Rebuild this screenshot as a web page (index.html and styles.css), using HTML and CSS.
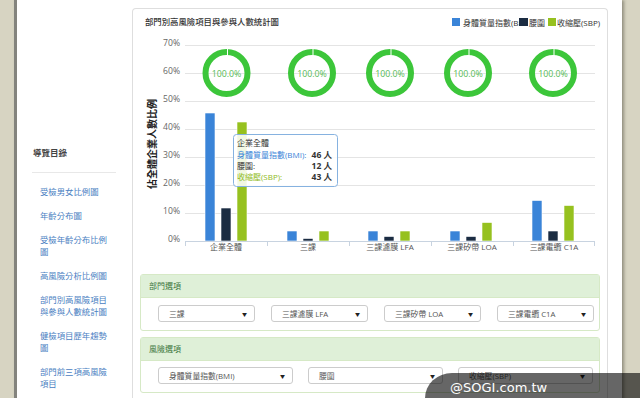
FILE: index.html
```html
<!DOCTYPE html>
<html lang="zh-Hant">
<head>
<meta charset="utf-8">
<title>部門別高風險項目與參與人數統計圖</title>
<link rel="stylesheet" href="styles.css">
</head>
<body>
<div class="page">
  <aside class="sidebar">
    <h3 class="nav-title">導覽目錄</h3>
    <ul class="nav-list">
      <li><a href="#">受檢男女比例圖</a></li>
      <li><a href="#">年齡分布圖</a></li>
      <li><a href="#">受檢年齡分布比例圖</a></li>
      <li><a href="#">高風險分析比例圖</a></li>
      <li><a href="#">部門別高風險項目與參與人數統計圖</a></li>
      <li><a href="#">健檢項目歷年趨勢圖</a></li>
      <li><a href="#">部門前三項高風險項目</a></li>
    </ul>
  </aside>
  <main class="main">
    <section class="card">
      <svg class="chart" width="474" height="259" viewBox="133 9 474 259" xmlns="http://www.w3.org/2000/svg">
        <defs>
          <clipPath id="clipL1"><rect x="440" y="10" width="79" height="22"/></clipPath>
          <clipPath id="clipL3"><rect x="540" y="10" width="61" height="22"/></clipPath>
        </defs>
        <text class="title" x="145" y="25">部門別高風險項目與參與人數統計圖</text>

        <rect x="452" y="18" width="8" height="8" fill="#3a84d8"/>
        <text class="legend" x="463" y="25.5" clip-path="url(#clipL1)">身體質量指數(BMI)</text>
        <rect x="519" y="18" width="9" height="8" fill="#1b2c42"/>
        <text class="legend" x="529" y="25.5">腰圍</text>
        <rect x="548" y="18" width="8" height="8" fill="#96c11f"/>
        <text class="legend" x="557" y="25.5" clip-path="url(#clipL3)">收縮壓(SBP)</text>

        <g class="grid">
          <line x1="185" x2="595" y1="45.5" y2="45.5"/>
          <line x1="185" x2="595" y1="73.5" y2="73.5"/>
          <line x1="185" x2="595" y1="101.5" y2="101.5"/>
          <line x1="185" x2="595" y1="129.5" y2="129.5"/>
          <line x1="185" x2="595" y1="157.5" y2="157.5"/>
          <line x1="185" x2="595" y1="185.5" y2="185.5"/>
          <line x1="185" x2="595" y1="213.5" y2="213.5"/>
        </g>
        <g class="ylabels">
          <text x="180" y="46">70%</text>
          <text x="180" y="74">60%</text>
          <text x="180" y="102">50%</text>
          <text x="180" y="130">40%</text>
          <text x="180" y="158">30%</text>
          <text x="180" y="186">20%</text>
          <text x="180" y="214">10%</text>
          <text x="180" y="242">0%</text>
        </g>

        <g class="bars">
          <rect class="b1" x="205" y="113" width="10" height="128"/>
          <rect class="b2" x="221" y="208" width="10" height="33"/>
          <rect class="b3" x="237" y="122" width="10" height="119"/>

          <rect class="b1" x="287" y="231" width="10" height="10"/>
          <rect class="b2" x="303" y="238.5" width="10" height="2.5"/>
          <rect class="b3" x="319" y="231" width="10" height="10"/>

          <rect class="b1" x="368" y="231" width="10" height="10"/>
          <rect class="b2" x="384" y="236.5" width="10" height="4.5"/>
          <rect class="b3" x="400" y="231" width="10" height="10"/>

          <rect class="b1" x="450" y="231" width="10" height="10"/>
          <rect class="b2" x="466" y="236.5" width="10" height="4.5"/>
          <rect class="b3" x="482" y="222.5" width="10" height="18.5"/>

          <rect class="b1" x="532" y="200.5" width="10" height="40.5"/>
          <rect class="b2" x="548" y="231" width="10" height="10"/>
          <rect class="b3" x="564" y="205.5" width="10" height="35.5"/>
        </g>

        <g class="axis">
          <line x1="185" x2="595" y1="241.5" y2="241.5"/>
          <line x1="185.5" x2="185.5" y1="241" y2="246"/>
          <line x1="267.5" x2="267.5" y1="241" y2="246"/>
          <line x1="349.5" x2="349.5" y1="241" y2="246"/>
          <line x1="431.5" x2="431.5" y1="241" y2="246"/>
          <line x1="513.5" x2="513.5" y1="241" y2="246"/>
          <line x1="594.5" x2="594.5" y1="241" y2="246"/>
        </g>
        <g class="xlabels">
          <text x="226" y="250">企業全體</text>
          <text x="308" y="250">三課</text>
          <text x="390" y="250">三課濾膜 LFA</text>
          <text x="472" y="250">三課矽帶 LOA</text>
          <text x="554" y="250">三課電纜 C1A</text>
        </g>

        <g class="donuts">
          <circle cx="226.5" cy="73" r="21"/>
          <circle cx="312" cy="73" r="21"/>
          <circle cx="390" cy="73" r="21"/>
          <circle cx="468" cy="73" r="21"/>
          <circle cx="553" cy="73" r="21"/>
          <rect class="gap" x="227" y="48" width="1" height="8"/>
          <rect class="gap" x="312.5" y="48" width="1" height="8"/>
          <rect class="gap" x="390.5" y="48" width="1" height="8"/>
          <rect class="gap" x="468.5" y="48" width="1" height="8"/>
          <rect class="gap" x="553.5" y="48" width="1" height="8"/>
          <text x="226.5" y="76.5">100.0%</text>
          <text x="312" y="76.5">100.0%</text>
          <text x="390" y="76.5">100.0%</text>
          <text x="468" y="76.5">100.0%</text>
          <text x="553" y="76.5">100.0%</text>
        </g>

        <text class="ytitle" transform="translate(156 144) rotate(-90)">佔全體企業人數比例</text>

        <g class="tooltip">
          <rect x="233.5" y="134.5" width="104" height="52" rx="3"/>
          <text class="tt-head" x="237" y="146">企業全體</text>
          <text class="tt-l1" x="237" y="158">身體質量指數(BMI):</text>
          <text class="tt-v" x="332" y="158">46 人</text>
          <text class="tt-l2" x="237" y="169">腰圍:</text>
          <text class="tt-v" x="332" y="169">12 人</text>
          <text class="tt-l3" x="237" y="180">收縮壓(SBP):</text>
          <text class="tt-v" x="332" y="180">43 人</text>
        </g>
      </svg>

      <div class="panel">
        <div class="panel-heading">部門選項</div>
        <div class="panel-body dept">
          <div class="select"><span>三課</span><span class="caret">▼</span></div>
          <div class="select"><span>三課濾膜 LFA</span><span class="caret">▼</span></div>
          <div class="select"><span>三課矽帶 LOA</span><span class="caret">▼</span></div>
          <div class="select"><span>三課電纜 C1A</span><span class="caret">▼</span></div>
        </div>
      </div>

      <div class="panel">
        <div class="panel-heading">風險選項</div>
        <div class="panel-body risk">
          <div class="select"><span>身體質量指數(BMI)</span><span class="caret">▼</span></div>
          <div class="select"><span>腰圍</span><span class="caret">▼</span></div>
          <div class="select"><span>收縮壓(SBP)</span><span class="caret">▼</span></div>
        </div>
      </div>
    </section>
  </main>
</div>
<div class="watermark">@SOGI.com.tw</div>
</body>
</html>
```

FILE: styles.css
```css
html, body {
  margin: 0;
  padding: 0;
}
body {
  background: #d7d4c2;
  font-family: "Open Sans", "Noto Sans CJK TC", sans-serif;
  color: #333;
  height: 398px;
  overflow: hidden;
  position: relative;
}
.page {
  margin-left: 14px;
  width: 605px;
  min-height: 398px;
  background: #fff;
  border-left: 3px solid #83837d;
  box-shadow: 2px 0 3px rgba(60, 58, 45, 0.45);
  display: flex;
  align-items: flex-start;
  padding-top: 8px;
  box-sizing: border-box;
  width: 608px;
}
.sidebar {
  width: 115px;
  flex: none;
  padding-top: 139px;
}
.nav-title {
  margin: 0 16px 0 15px;
  padding: 0 0 13px 1px;
  border-bottom: 1px solid #e8e8e8;
  font-size: 8.5px;
  line-height: 12px;
  font-weight: bold;
  color: #444;
}
.nav-list {
  list-style: none;
  margin: 13px 0 0;
  padding: 0 0 0 23px;
  width: 72px;
}
.nav-list li {
  margin-bottom: 12px;
  font-size: 8.4px;
  line-height: 12px;
}
.nav-list a {
  color: #4a80c2;
  text-decoration: none;
}
.main {
  width: 476px;
  flex: none;
}
.card {
  border: 1px solid #dedede;
  border-bottom: none;
  border-radius: 4px 4px 0 0;
  min-height: 400px;
}
.chart {
  display: block;
}
.chart text {
  font-family: "Open Sans", "Noto Sans CJK TC", sans-serif;
}
.chart .title {
  font-size: 8.4px;
  font-weight: 500;
  fill: #333;
}
.chart .legend {
  font-size: 8px;
  fill: #333;
}
.grid line {
  stroke: #e4e4e4;
  stroke-width: 1;
}
.ylabels text {
  font-size: 8.6px;
  fill: #666;
  text-anchor: end;
}
.bars rect {
  stroke: #fff;
  stroke-width: 0.6;
}
.bars .b1 { fill: #3a84d8; }
.bars .b2 { fill: #1b2c42; }
.bars .b3 { fill: #96c11f; }
.axis line {
  stroke: #c8d3e0;
  stroke-width: 1;
}
.xlabels text {
  font-size: 8px;
  fill: #555;
  text-anchor: middle;
}
.donuts circle {
  fill: none;
  stroke: #3cc63a;
  stroke-width: 6;
}
.donuts .gap {
  fill: #fff;
}
.donuts text {
  font-size: 8.8px;
  fill: #57bb55;
  text-anchor: middle;
}
.ytitle {
  font-size: 10px;
  font-weight: bold;
  fill: #222;
  text-anchor: middle;
}
.tooltip rect {
  fill: rgba(255, 255, 255, 0.88);
  stroke: #86b2e0;
  stroke-width: 1;
}
.tooltip text {
  font-size: 8px;
}
.tooltip .tt-head { fill: #333; }
.tooltip .tt-l1 { fill: #3a84d8; }
.tooltip .tt-l2 { fill: #333; }
.tooltip .tt-l3 { fill: #8fba1c; }
.tooltip .tt-v {
  fill: #333;
  font-weight: bold;
  text-anchor: end;
  font-size: 8.5px;
}
.panel {
  margin: 6px 7px 0;
  border: 1px solid #d6e9c6;
  border-radius: 3px;
}
.panel-heading {
  background: #dff0d8;
  border-bottom: 1px solid #d6e9c6;
  height: 22px;
  line-height: 22px;
  padding-left: 8px;
  font-size: 8px;
  color: #3c763d;
}
.panel-body {
  display: flex;
  padding: 7px 0 8px 17px;
}
.panel-body.dept { gap: 16px; }
.panel-body.dept .select { width: 97px; }
.panel-body.risk { gap: 15px; padding-top: 6px; }
.panel-body.risk .select { width: 135px; }
.select {
  box-sizing: border-box;
  height: 17px;
  border: 1px solid #cccccc;
  border-radius: 3px;
  display: flex;
  align-items: center;
  justify-content: space-between;
  padding: 0 7px 0 10px;
  font-size: 7.8px;
  color: #555;
  background: #fff;
}
.caret {
  font-size: 5px;
  color: #222;
}
.watermark {
  position: absolute;
  left: 425px;
  top: 373px;
  right: 0;
  bottom: 0;
  background: rgba(0, 0, 0, 0.6);
  border-top-left-radius: 28px 26px;
  color: #fff;
  font-family: "DejaVu Sans", sans-serif;
  font-size: 13px;
  line-height: 13px;
  padding: 8px 0 0 25px;
  box-sizing: border-box;
}
```
